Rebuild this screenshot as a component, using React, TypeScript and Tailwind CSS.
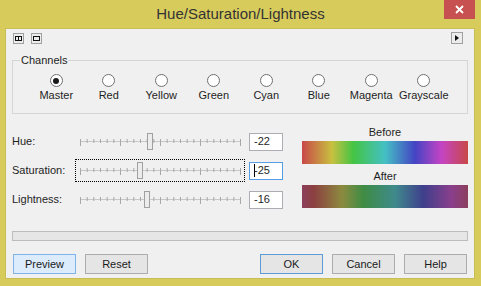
import React from 'react';

const channels = ['Master', 'Red', 'Yellow', 'Green', 'Cyan', 'Blue', 'Magenta', 'Grayscale'];

const sliders = [
    { label: 'Hue:', value: '-22', pos: 0.439, focused: false },
    { label: 'Saturation:', value: '-25', pos: 0.375, focused: true },
    { label: 'Lightness:', value: '-16', pos: 0.42, focused: false },
];

const TickSlider: React.FC<{ pos: number }> = ({ pos }) => {
    const ticks = [];
    for (let i = 0; i <= 24; i++) {
        const x = 4.5 + (160 * i) / 24;
        const long = i % 6 === 0;
        ticks.push(<line key={i} x1={x} x2={x} y1={8} y2={long ? 15 : 12} stroke="#a8a8a8" strokeWidth={1} />);
    }
    const tx = Math.round(4 + 160 * pos) - 2.5;
    return (
        <svg width="168" height="21" viewBox="0 0 168 21">
            <line x1={4.5} x2={164.5} y1={10.5} y2={10.5} stroke="#c8c8c8" strokeWidth={1} />
            {ticks}
            <rect x={tx} y={2.5} width={5} height={16} fill="#ececec" stroke="#a0a0a0" strokeWidth={1} />
        </svg>
    );
};

const Btn: React.FC<{ label: string; kind?: 'hot' | 'default' }> = ({ label, kind }) => {
    const cls =
        kind === 'hot'
            ? 'bg-[#dcecfc] border-[#7eb4ea]'
            : kind === 'default'
            ? 'bg-[#e5e5e5] border-[#5b9bd8]'
            : 'bg-[#e5e5e5] border-[#acacac]';
    return (
        <div className={`w-[63px] h-[20px] border ${cls} flex items-center justify-center text-[11px] text-[#1a1a1a]`}>
            {label}
        </div>
    );
};

export default function App() {
    return (
        <div className="w-[481px] h-[286px] bg-[#d7cb5c] flex flex-col font-['Liberation_Sans',Arial,sans-serif] text-[#1e1e1e]">
            <div className="h-[28px] shrink-0 grid grid-cols-[1fr_auto_1fr]">
                <div />
                <div className="text-[15px] leading-[28px] text-[#333]">Hue/Saturation/Lightness</div>
                <div className="flex justify-end pr-[6px]">
                    <div className="w-[31px] h-[19px] bg-[#c75050] flex items-center justify-center">
                        <svg width="9" height="9" viewBox="0 0 9 9">
                            <path d="M1 1L8 8M8 1L1 8" stroke="#fff" strokeWidth="1.8" />
                        </svg>
                    </div>
                </div>
            </div>

            <div className="ml-[5px] mr-[6px] mb-[7px] flex-1 bg-[#f0f0f0] border border-[#c9bd55] flex flex-col">
                {/* toolbar */}
                <div className="flex items-center h-[12px] mt-[3px] pl-[7px] pr-[11px]">
                    <div className="w-[11px] h-[11px] border border-[#a0a0a0] bg-[#ececec] flex items-center justify-center">
                        <svg width="7" height="5" viewBox="0 0 7 5">
                            <rect x="0.5" y="0.5" width="6" height="4" fill="none" stroke="#111" />
                            <line x1="3.5" x2="3.5" y1="0.5" y2="4.5" stroke="#111" />
                        </svg>
                    </div>
                    <div className="w-[11px] h-[11px] ml-[7px] border border-[#a0a0a0] bg-[#ececec] flex items-center justify-center">
                        <svg width="7" height="5" viewBox="0 0 7 5">
                            <rect x="0.5" y="0.5" width="6" height="4" fill="none" stroke="#111" />
                        </svg>
                    </div>
                    <div className="flex-1" />
                    <div className="w-[12px] h-[12px] border border-[#a0a0a0] bg-[#ececec] flex items-center justify-center">
                        <svg width="4" height="6" viewBox="0 0 4 6">
                            <path d="M0 0L4 3L0 6Z" fill="#111" />
                        </svg>
                    </div>
                </div>

                {/* channels */}
                <fieldset className="mx-[6px] mt-[10px] p-0 border border-[#d5d5d5]">
                    <legend className="ml-[7px] px-[1px] text-[11px] leading-[13px]">Channels</legend>
                    <div className="grid grid-cols-8 px-[17px] pt-[7px] pb-[11px]">
                        {channels.map((c, i) => (
                            <div key={c} className="flex flex-col items-center">
                                <div className="w-[13px] h-[13px] rounded-full border border-[#707070] bg-white flex items-center justify-center">
                                    {i === 0 && <div className="w-[6px] h-[6px] rounded-full bg-[#1a1a1a]" />}
                                </div>
                                <div className="mt-[2px] text-[11px] leading-[13px]">{c}</div>
                            </div>
                        ))}
                    </div>
                </fieldset>

                {/* sliders + preview */}
                <div className="flex mt-[12px] px-[6px]">
                    <div className="w-[271px] pt-[1px] flex flex-col">
                        {sliders.map((s) => (
                            <div key={s.label} className="h-[29px] flex items-center">
                                <div className="w-[63px] text-[11px]">{s.label}</div>
                                <div
                                    className={`w-[170px] h-[23px] border ${
                                        s.focused ? 'border-dotted border-black' : 'border-transparent'
                                    }`}
                                >
                                    <TickSlider pos={s.pos} />
                                </div>
                                <div
                                    className={`ml-[4px] w-[34px] h-[18px] bg-white border ${
                                        s.focused ? 'border-[#569de5]' : 'border-[#abadb3]'
                                    } flex items-center pl-[4px] text-[11px]`}
                                >
                                    {s.focused && <span className="inline-block w-px h-[13px] bg-black -mr-[1px]" />}
                                    {s.value}
                                </div>
                            </div>
                        ))}
                    </div>
                    <div className="ml-[19px] w-[166px] flex flex-col">
                        <div className="text-center text-[11px] leading-[13px]">Before</div>
                        <div className="mt-[2px] h-[23px] bg-[linear-gradient(to_right,#c84848_0%,#c8c040_18%,#44c444_31%,#44c0c4_50%,#4444c4_68%,#c444c4_84%,#c84848_100%)]" />
                        <div className="mt-[6px] text-center text-[11px] leading-[13px]">After</div>
                        <div className="mt-[2px] h-[23px] bg-[linear-gradient(to_right,#8c3f5c_0%,#8c4040_7%,#8c8a3f_24%,#3f8c44_37%,#3f8a8c_56%,#3f3f8c_73%,#8a3f8c_90%,#8c3f5c_100%)]" />
                    </div>
                </div>

                {/* progress */}
                <div className="mx-[6px] mt-[17px] h-[10px] border border-[#bcbcbc] bg-[#e6e6e6]" />

                {/* buttons */}
                <div className="flex justify-between px-[7px] mt-[13px]">
                    <div className="flex gap-[9px]">
                        <Btn label="Preview" kind="hot" />
                        <Btn label="Reset" />
                    </div>
                    <div className="flex gap-[9px]">
                        <Btn label="OK" kind="default" />
                        <Btn label="Cancel" />
                        <Btn label="Help" />
                    </div>
                </div>
            </div>
        </div>
    );
}
